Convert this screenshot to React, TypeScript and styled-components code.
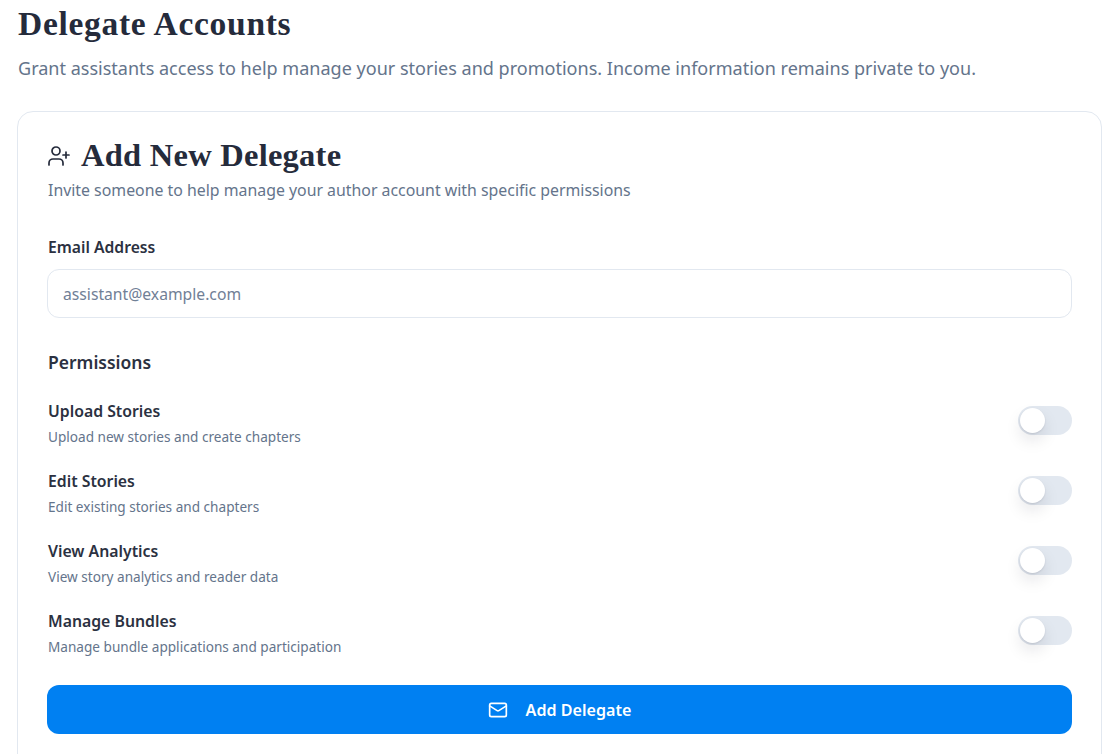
import React from "react";
import styled, { createGlobalStyle } from "styled-components";

const GlobalStyle = createGlobalStyle`
  html, body {
    margin: 0;
    padding: 0;
    height: 754px;
    overflow: hidden;
    background: #ffffff;
  }
  * { box-sizing: border-box; }
`;

const Page = styled.div`
  padding: 0 18px 0 17px;
  font-family: "Noto Sans", "Open Sans", sans-serif;
  color: #2b3141;
`;

const PageTitle = styled.h1`
  margin: 0;
  padding-left: 1px;
  height: 48px;
  font-family: "Liberation Serif", serif;
  font-size: 33.5px;
  letter-spacing: 0.7px;
  line-height: 48px;
  font-weight: 700;
  color: #252b3b;
`;

const PageIntro = styled.p`
  margin: 8px 0 30px;
  padding-left: 1px;
  font-size: 18.05px;
  line-height: 25px;
  color: #64748b;
`;

const Card = styled.section`
  border: 1px solid #e2e8f0;
  border-radius: 16px;
  padding: 23px 29px 20px;
  height: 660px;
`;

const CardHeading = styled.div`
  display: flex;
  align-items: center;
  gap: 10px;
  height: 42px;
`;

const CardTitle = styled.h2`
  margin: 0;
  padding-bottom: 2px;
  font-family: "Liberation Serif", serif;
  font-size: 32.5px;
  letter-spacing: 0.25px;
  line-height: 40px;
  font-weight: 700;
  color: #252b3b;
`;

const CardIntro = styled.p`
  margin: 1px 0 0;
  padding-left: 1px;
  font-size: 15.86px;
  line-height: 24px;
  color: #64748b;
`;

const FieldLabel = styled.label`
  display: block;
  margin-top: 33px;
  padding-left: 1px;
  font-size: 15.7px;
  line-height: 24px;
  font-weight: 600;
`;

const EmailInput = styled.input`
  display: block;
  width: 100%;
  height: 49px;
  margin-top: 10px;
  padding: 0 15px;
  border: 1px solid #e2e8f0;
  border-radius: 12px;
  background: #fff;
  font-family: inherit;
  font-size: 15.7px;
  color: #252b3b;

  &::placeholder {
    color: #718096;
    opacity: 1;
  }
`;

const SectionTitle = styled.h3`
  margin: 31px 0 0;
  padding-left: 1px;
  font-size: 17.5px;
  line-height: 27px;
  font-weight: 600;
`;

const PermissionList = styled.div`
  display: flex;
  flex-direction: column;
  gap: 20px;
  margin-top: 23px;
`;

const PermissionRow = styled.div`
  display: flex;
  align-items: flex-start;
  justify-content: space-between;
  height: 50px;
  padding-left: 1px;
`;

const PermissionName = styled.div`
  font-size: 15.8px;
  line-height: 24px;
  font-weight: 600;
`;

const PermissionHint = styled.div`
  margin-top: 2px;
  font-size: 13.6px;
  line-height: 24px;
  color: #64748b;
`;

const Toggle = styled.span`
  position: relative;
  display: block;
  width: 54px;
  height: 29px;
  margin-top: 7px;
  border-radius: 15px;
  background: #e2e8f0;
`;

const ToggleKnob = styled.span`
  position: absolute;
  top: 2px;
  left: 2px;
  width: 25px;
  height: 25px;
  border-radius: 50%;
  background: #fff;
  box-shadow: 0 8px 16px rgba(15, 23, 42, 0.1), 0 1px 2px rgba(15, 23, 42, 0.1);
`;

const SubmitButton = styled.button`
  display: flex;
  align-items: center;
  justify-content: center;
  gap: 18px;
  width: 100%;
  height: 49px;
  margin-top: 26px;
  border: 0;
  border-radius: 12px;
  background: #0080f2;
  color: #fff;
  font-family: inherit;
  font-size: 16.1px;
  font-weight: 600;
`;

const UserPlusIcon = () => (
  <svg width="24" height="24" viewBox="0 0 24 24" fill="none" stroke="#252b3b" strokeWidth="1.7" strokeLinecap="round" strokeLinejoin="round">
    <path d="M16 21v-2a4 4 0 0 0-4-4H6a4 4 0 0 0-4 4v2" />
    <circle cx="9" cy="7" r="4" />
    <path d="M19 8v6M22 11h-6" />
  </svg>
);

const MailIcon = () => (
  <svg width="20" height="20" viewBox="0 0 24 24" fill="none" stroke="#fff" strokeWidth="2" strokeLinecap="round" strokeLinejoin="round">
    <rect x="2" y="4" width="20" height="16" rx="2" />
    <path d="m22 7-8.97 5.7a1.94 1.94 0 0 1-2.06 0L2 7" />
  </svg>
);

const permissions = [
  { name: "Upload Stories", hint: "Upload new stories and create chapters" },
  { name: "Edit Stories", hint: "Edit existing stories and chapters" },
  { name: "View Analytics", hint: "View story analytics and reader data" },
  { name: "Manage Bundles", hint: "Manage bundle applications and participation" },
];

export default function App() {
  return (
    <Page>
      <GlobalStyle />
      <PageTitle>Delegate Accounts</PageTitle>
      <PageIntro>
        Grant assistants access to help manage your stories and promotions. Income information remains private to you.
      </PageIntro>
      <Card>
        <CardHeading>
          <UserPlusIcon />
          <CardTitle>Add New Delegate</CardTitle>
        </CardHeading>
        <CardIntro>Invite someone to help manage your author account with specific permissions</CardIntro>
        <FieldLabel htmlFor="delegate-email">Email Address</FieldLabel>
        <EmailInput id="delegate-email" type="email" placeholder="assistant@example.com" />
        <SectionTitle>Permissions</SectionTitle>
        <PermissionList>
          {permissions.map((p) => (
            <PermissionRow key={p.name}>
              <div>
                <PermissionName>{p.name}</PermissionName>
                <PermissionHint>{p.hint}</PermissionHint>
              </div>
              <Toggle>
                <ToggleKnob />
              </Toggle>
            </PermissionRow>
          ))}
        </PermissionList>
        <SubmitButton>
          <MailIcon />
          Add Delegate
        </SubmitButton>
      </Card>
    </Page>
  );
}
